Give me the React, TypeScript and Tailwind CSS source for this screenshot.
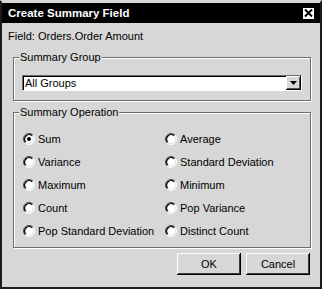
import React from 'react';

const leftOps = ['Sum', 'Variance', 'Maximum', 'Count', 'Pop Standard Deviation'];
const rightOps = ['Average', 'Standard Deviation', 'Minimum', 'Pop Variance', 'Distinct Count'];

function Radio({ checked = false }: { checked?: boolean }) {
  return (
    <svg width="12" height="12" viewBox="0 0 12 12" className="shrink-0">
      <circle cx="6" cy="6" r="5" fill="#fff" />
      <path d="M2.11 9.89 A5.5 5.5 0 0 1 9.89 2.11" fill="none" stroke="#4a4a4a" strokeWidth="1" />
      <path d="M2.82 9.18 A4.5 4.5 0 0 1 9.18 2.82" fill="none" stroke="#000" strokeWidth="1.4" />
      <path d="M2.11 9.89 A5.5 5.5 0 0 0 9.89 2.11" fill="none" stroke="#fff" strokeWidth="1" />
      <path d="M2.82 9.18 A4.5 4.5 0 0 0 9.18 2.82" fill="none" stroke="#e4e4e4" strokeWidth="1" />
      {checked && <circle cx="6" cy="6" r="2" fill="#000" />}
    </svg>
  );
}

function RadioItem({ label, checked }: { label: string; checked?: boolean }) {
  return (
    <div className="h-[23px] flex items-center gap-[3px]">
      <Radio checked={checked} />
      <span>{label}</span>
    </div>
  );
}

function Group({ title, className, children }: { title: string; className: string; children: React.ReactNode }) {
  return (
    <div className={`relative border border-[#6e6e6e] shadow-[inset_1px_1px_0_#fff,1px_1px_0_#fff] ${className}`}>
      <span className="absolute -top-[8px] left-[5px] px-[1px] bg-[#d7d7d7] leading-[14px]">{title}</span>
      {children}
    </div>
  );
}

function Button({ children }: { children: React.ReactNode }) {
  return (
    <div className="w-[64px] h-[22px] flex items-center justify-center bg-[#d7d7d7] shadow-[inset_-1px_-1px_0_#000,inset_1px_1px_0_#fff,inset_-2px_-2px_0_#3c3c3c]">
      {children}
    </div>
  );
}

export default function App() {
  return (
    <div className="w-[322px] h-[289px] bg-[#d7d7d7] border-2 border-[#1c1c1c] border-t-[#d7d7d7] flex flex-col font-['Liberation_Sans',Arial,sans-serif] text-[11px] leading-[14px] text-black">
      {/* title bar */}
      <div className="h-[20px] mt-[1px] bg-black flex items-center justify-between pl-[6px] pr-[5px]">
        <span className="text-white font-bold text-[11.5px] leading-[14px]">Create Summary Field</span>
        <div className="w-[13px] h-[13px] bg-white border border-black flex items-center justify-center">
          <svg width="9" height="8" viewBox="0 0 9 8">
            <path d="M1 0.5 L8 7.5 M8 0.5 L1 7.5" stroke="#000" strokeWidth="2" />
          </svg>
        </div>
      </div>

      <div className="mt-[6px] pl-[6px]">Field: Orders.Order Amount</div>

      <Group title="Summary Group" className="mt-[14px] ml-[11px] mr-[9px] pt-[17px] pb-[9px] px-[8px]">
        <div className="h-[16px] bg-white flex items-center justify-between border-t border-l border-[#6a6a6a] border-b border-r border-b-white border-r-white shadow-[inset_1px_1px_0_#000]">
          <span className="pl-[2px]">All Groups</span>
          <div className="w-[15px] h-[14px] bg-[#d7d7d7] flex items-center justify-center shadow-[inset_-1px_-1px_0_#000,inset_1px_1px_0_#fff,inset_-2px_-2px_0_#555]">
            <svg width="7" height="4" viewBox="0 0 7 4">
              <path d="M0 0 H7 L3.5 4 Z" fill="#000" />
            </svg>
          </div>
        </div>
      </Group>

      <Group title="Summary Operation" className="mt-[11px] ml-[11px] mr-[9px] pt-[14px] pb-[5px] pl-[9px]">
        <div className="grid grid-cols-[142px_1fr]">
          {leftOps.map((l, i) => (
            <React.Fragment key={l}>
              <RadioItem label={l} checked={i === 0} />
              <RadioItem label={rightOps[i]} />
            </React.Fragment>
          ))}
        </div>
      </Group>

      <div className="mt-[5px] pr-[10px] flex justify-end gap-[5px]">
        <Button>OK</Button>
        <Button>Cancel</Button>
      </div>
    </div>
  );
}
